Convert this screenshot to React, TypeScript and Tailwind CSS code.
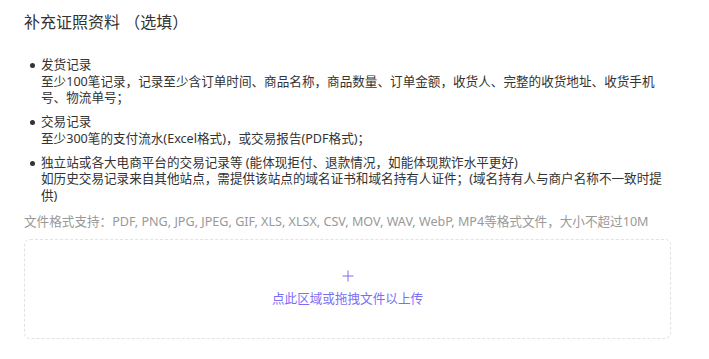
const items = [
  {
    title: '发货记录',
    desc: '至少100笔记录，记录至少含订单时间、商品名称，商品数量、订单金额，收货人、完整的收货地址、收货手机号、物流单号；',
  },
  {
    title: '交易记录',
    desc: '至少300笔的支付流水(Excel格式)，或交易报告(PDF格式)；',
  },
  {
    title: '独立站或各大电商平台的交易记录等 (能体现拒付、退款情况，如能体现欺诈水平更好)',
    desc: '如历史交易记录来自其他站点，需提供该站点的域名证书和域名持有人证件；(域名持有人与商户名称不一致时提供)',
  },
];

export default function App() {
  return (
    <div
      className="w-[709px] h-[359px] bg-white pl-[24px] pt-[10px]"
      style={{ fontFamily: '"Noto Sans", "Noto Sans CJK SC", sans-serif' }}
    >
      <h2 className="text-[16px] leading-[24px] text-[#333]">补充证照资料 （选填）</h2>

      <ul className="mt-[23px] flex flex-col gap-[7.5px]">
        {items.map((item) => (
          <li key={item.title} className="flex text-[12.6px] leading-[16.5px] text-[#333]">
            <span className="mt-[6px] ml-[6px] w-[5px] h-[5px] rounded-full bg-[#333] shrink-0" />
            <div className="ml-[6px] w-[623px]">
              <div>{item.title}</div>
              <div>{item.desc}</div>
            </div>
          </li>
        ))}
      </ul>

      <p className="mt-[10px] text-[12.6px] leading-[16.5px] text-[#999]">
        文件格式支持：PDF, PNG, JPG, JPEG, GIF, XLS, XLSX, CSV, MOV, WAV, WebP, MP4等格式文件，大小不超过10M
      </p>

      <div className="mt-[8px] w-[647px] h-[100px] border border-dashed border-[#e2e2e2] rounded-[6px] flex flex-col items-center justify-center cursor-pointer">
        <svg width="12" height="12" viewBox="0 0 12 12" className="text-[#7b6ef6]">
          <path d="M6 0.5V11.5M0.5 6H11.5" stroke="currentColor" strokeWidth="1" fill="none" />
        </svg>
        <div className="mt-[9px] text-[12.6px] leading-[16.5px] text-[#7b6ef6]">点此区域或拖拽文件以上传</div>
      </div>
    </div>
  );
}
